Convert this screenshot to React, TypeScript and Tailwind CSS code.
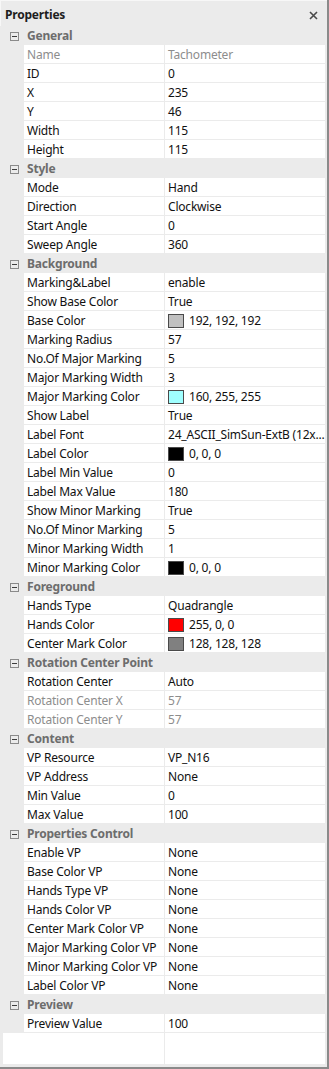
import React from "react";

type Row = {
  label: string;
  value: string;
  swatch?: string;
  muted?: boolean;
};

type Section = { title: string; rows: Row[] };

const SECTIONS: Section[] = [
  {
    title: "General",
    rows: [
      { label: "Name", value: "Tachometer", muted: true },
      { label: "ID", value: "0" },
      { label: "X", value: "235" },
      { label: "Y", value: "46" },
      { label: "Width", value: "115" },
      { label: "Height", value: "115" },
    ],
  },
  {
    title: "Style",
    rows: [
      { label: "Mode", value: "Hand" },
      { label: "Direction", value: "Clockwise" },
      { label: "Start Angle", value: "0" },
      { label: "Sweep Angle", value: "360" },
    ],
  },
  {
    title: "Background",
    rows: [
      { label: "Marking&Label", value: "enable" },
      { label: "Show Base Color", value: "True" },
      { label: "Base Color", value: "192, 192, 192", swatch: "#c0c0c0" },
      { label: "Marking Radius", value: "57" },
      { label: "No.Of Major Marking", value: "5" },
      { label: "Major Marking Width", value: "3" },
      { label: "Major Marking Color", value: "160, 255, 255", swatch: "#a0ffff" },
      { label: "Show Label", value: "True" },
      { label: "Label Font", value: "24_ASCII_SimSun-ExtB (12x..." },
      { label: "Label Color", value: "0, 0, 0", swatch: "#000000" },
      { label: "Label Min Value", value: "0" },
      { label: "Label Max Value", value: "180" },
      { label: "Show Minor Marking", value: "True" },
      { label: "No.Of Minor Marking", value: "5" },
      { label: "Minor Marking Width", value: "1" },
      { label: "Minor Marking Color", value: "0, 0, 0", swatch: "#000000" },
    ],
  },
  {
    title: "Foreground",
    rows: [
      { label: "Hands Type", value: "Quadrangle" },
      { label: "Hands Color", value: "255, 0, 0", swatch: "#ff0000" },
      { label: "Center Mark Color", value: "128, 128, 128", swatch: "#808080" },
    ],
  },
  {
    title: "Rotation Center Point",
    rows: [
      { label: "Rotation Center", value: "Auto" },
      { label: "Rotation Center X", value: "57", muted: true },
      { label: "Rotation Center Y", value: "57", muted: true },
    ],
  },
  {
    title: "Content",
    rows: [
      { label: "VP Resource", value: "VP_N16" },
      { label: "VP Address", value: "None" },
      { label: "Min Value", value: "0" },
      { label: "Max Value", value: "100" },
    ],
  },
  {
    title: "Properties Control",
    rows: [
      { label: "Enable VP", value: "None" },
      { label: "Base Color VP", value: "None" },
      { label: "Hands Type VP", value: "None" },
      { label: "Hands Color VP", value: "None" },
      { label: "Center Mark Color VP", value: "None" },
      { label: "Major Marking Color VP", value: "None" },
      { label: "Minor Marking Color VP", value: "None" },
      { label: "Label Color VP", value: "None" },
    ],
  },
  {
    title: "Preview",
    rows: [{ label: "Preview Value", value: "100" }],
  },
];

function MinusBox() {
  return (
    <svg width="9" height="9" viewBox="0 0 9 9" className="block">
      <rect x="0.5" y="0.5" width="8" height="8" fill="none" stroke="#8a8a8a" />
      <line x1="2" y1="4.5" x2="7" y2="4.5" stroke="#3c3c3c" />
    </svg>
  );
}

function PropRow({ row }: { row: Row }) {
  const text = row.muted ? "text-[#8d8d8d]" : "text-[#111]";
  return (
    <div className="flex h-[19px] pb-px">
      <div className="w-[21px] shrink-0" />
      <div className={`flex w-[140px] shrink-0 items-center overflow-hidden whitespace-nowrap bg-white pt-px pl-[3px] ${text}`}>
        {row.label}
      </div>
      <div className={`ml-px flex min-w-0 flex-1 items-center gap-[5px] overflow-hidden whitespace-nowrap bg-white pt-px pl-[3px] ${text}`}>
        {row.swatch && (
          <span
            className="h-[14px] w-[16px] shrink-0 border border-[#4a4a4a]"
            style={{ backgroundColor: row.swatch }}
          />
        )}
        <span>{row.value}</span>
      </div>
    </div>
  );
}

export default function App() {
  return (
    <div
      className="flex h-[1069px] w-[329px] flex-col border-r-2 border-b-2 border-[#8a8a8a] bg-[#ebebeb] text-[12px] leading-[16px] tracking-[-0.2px]"
      style={{ fontFamily: '"Noto Sans", "Open Sans", sans-serif' }}
    >
      {/* Title bar */}
      <div className="flex h-[26px] shrink-0 items-center justify-between border-t border-l border-[#f7f7f7] pt-[3px] pl-[4px] pr-[9px]">
        <span className="font-bold text-[#1e1e1e]">Properties</span>
        <svg width="9" height="9" viewBox="0 0 9 9">
          <path d="M1 1 L8 8 M8 1 L1 8" stroke="#4a4a4a" strokeWidth="1.6" />
        </svg>
      </div>

      {/* Grid */}
      <div className="mb-[3px] ml-[3px] mr-[2px] flex flex-1 flex-col">
        {SECTIONS.map((s) => (
          <div key={s.title}>
            <div className="flex h-[19px] items-center pt-px">
              <div className="flex w-[21px] justify-center pl-px">
                <MinusBox />
              </div>
              <span className="pl-[3px] font-bold text-[#6d6d6d]">{s.title}</span>
            </div>
            {s.rows.map((r) => (
              <PropRow key={r.label} row={r} />
            ))}
          </div>
        ))}
        <div className="flex flex-1 bg-white">
          <div className="w-[161px]" />
          <div className="w-px bg-[#ebebeb]" />
          <div className="flex-1" />
        </div>
      </div>
    </div>
  );
}
